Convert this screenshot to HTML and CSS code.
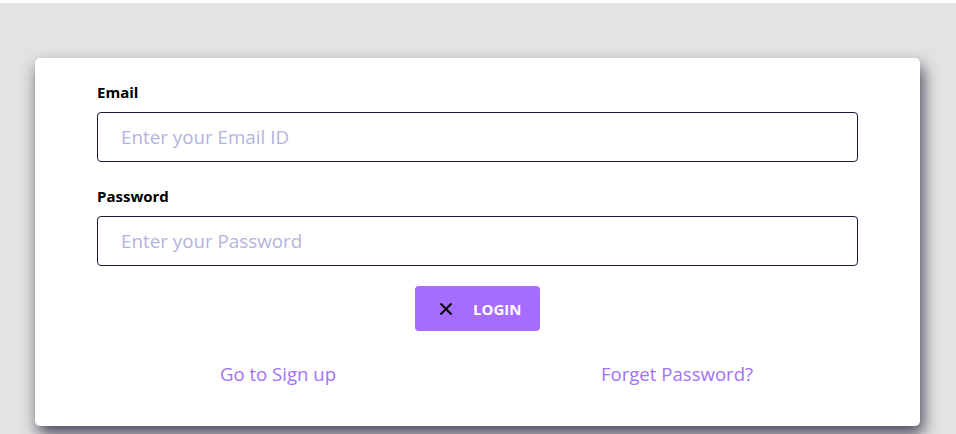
FILE: index.html
```html
<!DOCTYPE html>
<html lang="en">
<head>
    <meta charset="UTF-8">
    <meta name="viewport" content="width=device-width, initial-scale=1.0">
    <title>Login</title>
    <link rel="stylesheet" href="styles.css">
</head>
<body>
    <div class="page">
        <!-- Tarjeta de login -->
        <form class="card">
            <label class="field-label" for="email">Email</label>
            <input class="field-input" type="email" id="email" placeholder="Enter your Email ID">

            <label class="field-label" for="password">Password</label>
            <input class="field-input" type="password" id="password" placeholder="Enter your Password">

            <div class="actions">
                <button class="login-btn" type="button">
                    <svg class="login-icon" width="14" height="14" viewBox="0 0 14 14">
                        <path d="M1.5 1.5 L12.5 12.5 M12.5 1.5 L1.5 12.5" stroke="#000" stroke-width="1.8" fill="none"/>
                    </svg>
                    <span>LOGIN</span>
                </button>
            </div>

            <div class="links">
                <a href="#" class="link">Go to Sign up</a>
                <a href="#" class="link">Forget Password?</a>
            </div>
        </form>
    </div>
</body>
</html>
```

FILE: styles.css
```css
/* Estilos generales */
html {
    background-color: #fff;
}
body {
    margin: 0;
    font-family: "Open Sans", Arial, sans-serif;
}
.page {
    margin-top: 3px;
    min-height: calc(100vh - 3px);
    box-sizing: border-box;
    padding-top: 55px;
    background-color: #e3e3e3;
}

/* Tarjeta */
.card {
    width: 885px;
    margin-left: 35px;
    box-sizing: border-box;
    padding: 24px 62px 40px 62px;
    background-color: #fff;
    border-radius: 5px;
    box-shadow: 3px 8px 16px rgba(34, 36, 56, 0.82);
    display: flex;
    flex-direction: column;
}

/* Campos */
.field-label {
    font-size: 15px;
    font-weight: 700;
    color: #000;
    margin-bottom: 10px;
}
.field-input {
    height: 50px;
    box-sizing: border-box;
    border: 1px solid #1c1a33;
    border-radius: 4px;
    padding: 0 23px;
    font-family: inherit;
    font-size: 18.8px;
    color: #333;
    margin-bottom: 24px;
    outline: none;
}
.field-input::placeholder {
    color: #b4b3dd;
}
.field-input:last-of-type {
    margin-bottom: 20px;
}

/* Botón */
.actions {
    display: flex;
    justify-content: center;
}
.login-btn {
    display: flex;
    align-items: center;
    gap: 20px;
    width: 125px;
    height: 45px;
    padding: 0 0 0 24px;
    border: none;
    border-radius: 4px;
    background-color: #a66cff;
    color: #fff;
    font-family: inherit;
    font-size: 15px;
    font-weight: 700;
    cursor: pointer;
}
.login-icon {
    flex: none;
}

/* Enlaces */
.links {
    display: grid;
    grid-template-columns: 399px 399px;
    justify-content: center;
    margin-top: 30px;
}
.link {
    text-align: center;
    font-size: 18.6px;
    color: #a372f8;
    text-decoration: none;
}
```
